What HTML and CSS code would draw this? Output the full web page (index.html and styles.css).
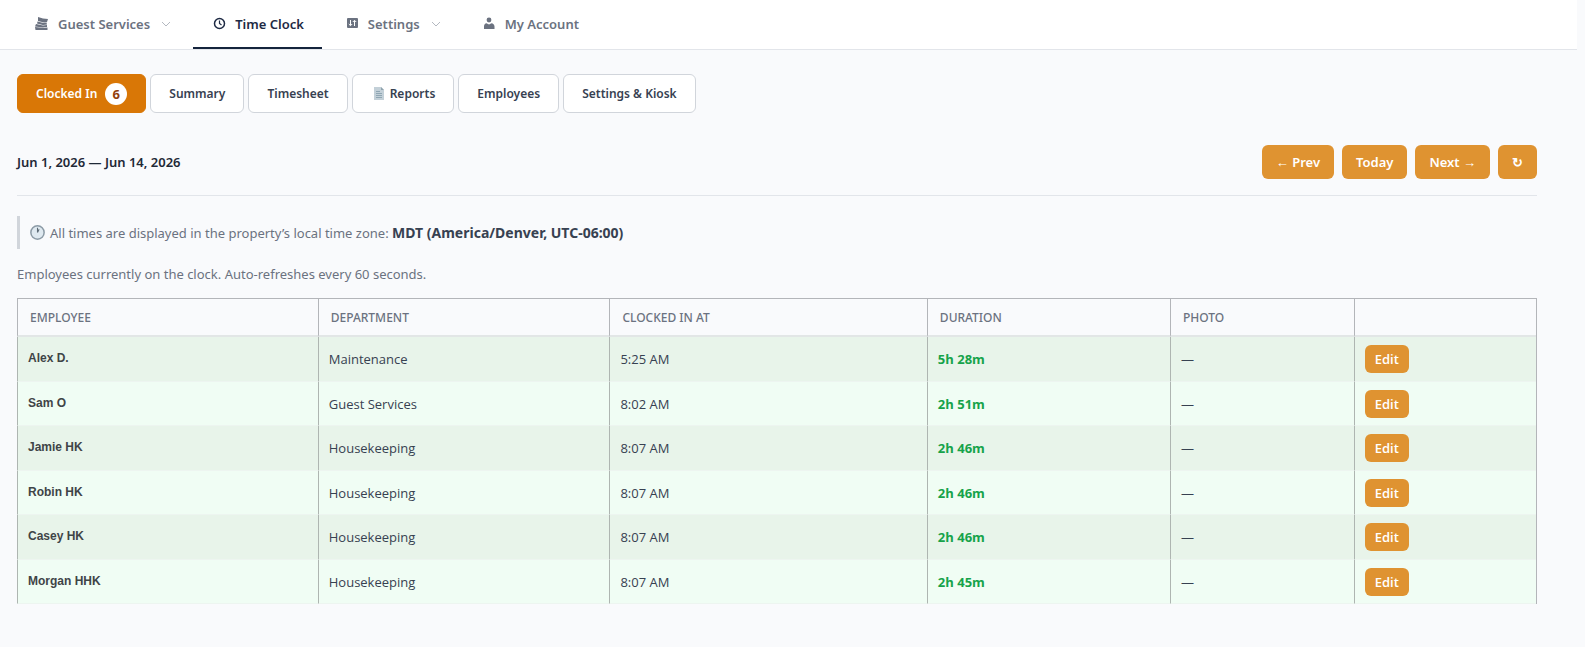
FILE: index.html
```
<!DOCTYPE html>
<html lang="en">
<head>
  <meta charset="UTF-8" />
  <title>Time Clock</title>
  <link rel="stylesheet" href="styles.css">
</head>
<body>
  <nav class="topnav">
    <a href="#" class="nav-item">
      <svg class="nav-icon" viewBox="0 0 16 16" fill="currentColor">
        <path d="M4 1l5 1.500 5 .5-1 3-3 .5-6-1.500z" />
        <path d="M3.500 5.500l6 1.500 3-.5.5 2-4 .5-6-1.500z" />
        <path d="M2 8l7 1.500 4-.5v2l-4 .5-8-1z" />
        <path d="M1 11l9 1 3.500-.5V14H1.500z" />
      </svg>
      <span>Guest Services</span>
      <svg class="chevron" viewBox="0 0 10 10"><path d="M1 3l4 4 4-4" /></svg>
    </a>
    <a href="#" class="nav-item active">
      <svg class="nav-icon" viewBox="0 0 16 16" fill="none" stroke="currentColor" stroke-width="1.500">
        <circle cx="8.500" cy="7.500" r="5" />
        <path d="M8.500 4.500v3l2 1.500" stroke-width="1.200" />
      </svg>
      <span>Time Clock</span>
    </a>
    <a href="#" class="nav-item">
      <svg class="nav-icon" viewBox="0 0 16 16">
        <rect x="3" y="2" width="11" height="10" rx="1" fill="currentColor" />
        <path d="M6.500 4v5.500M4.800 8l1.700 1.700L8.200 8M10.500 10V4.500M8.800 6l1.700-1.700L12.200 6" stroke="#fff" fill="none" />
      </svg>
      <span>Settings</span>
      <svg class="chevron" viewBox="0 0 10 10"><path d="M1 3l4 4 4-4" /></svg>
    </a>
    <a href="#" class="nav-item">
      <svg class="nav-icon" viewBox="0 0 16 16" fill="currentColor">
        <circle cx="8" cy="4" r="2.400" />
        <path d="M3 13v-2.500C3 8.500 4 7.500 5.500 7.200L8 8.500l2.500-1.300c1.500.3 3 1.300 3 3.300V13z" />
      </svg>
      <span>My Account</span>
    </a>
  </nav>

  <main class="page">
    <div class="tabs">
      <button class="tab active">Clocked In <span class="count">6</span></button>
      <button class="tab">Summary</button>
      <button class="tab">Timesheet</button>
      <button class="tab">
        <svg class="doc-icon" viewBox="0 0 12 14">
          <path d="M1 0h7l3 3v10H1z" fill="#c3d0d8" />
          <path d="M8 0v3h3z" fill="#8fa3ae" />
          <path d="M3 4.500h4M3 6.500h6M3 8.500h6M3 10.500h6" stroke="#8fa6b3" />
        </svg>
        Reports
      </button>
      <button class="tab">Employees</button>
      <button class="tab">Settings &amp; Kiosk</button>
    </div>

    <div class="period">
      <div class="period-label">Jun 1, 2026 — Jun 14, 2026</div>
      <div class="period-nav">
        <button class="btn">← Prev</button>
        <button class="btn">Today</button>
        <button class="btn">Next →</button>
        <button class="btn" aria-label="Refresh">↻</button>
      </div>
    </div>

    <div class="tz-note">
      <svg class="clock-icon" viewBox="0 0 14 14">
        <circle cx="7" cy="7" r="6.200" fill="#dfe9f0" stroke="#8c9ba6" stroke-width="1.400" />
        <path d="M7 7V2.500M7 7l1.500-3" stroke="#5d6b76" fill="none" />
      </svg>
      <span>All times are displayed in the property’s local time zone: <strong>MDT (America/Denver, UTC-06:00)</strong></span>
    </div>

    <p class="hint">Employees currently on the clock. Auto-refreshes every 60 seconds.</p>

    <table class="clock-table">
      <colgroup>
        <col class="col-employee">
        <col class="col-department">
        <col class="col-clocked">
        <col class="col-duration">
        <col class="col-photo">
        <col>
      </colgroup>
      <thead>
        <tr>
          <th>Employee</th>
          <th>Department</th>
          <th>Clocked In At</th>
          <th>Duration</th>
          <th>Photo</th>
          <th></th>
        </tr>
      </thead>
      <tbody>
        <tr>
          <td class="name">Alex D.</td>
          <td>Maintenance</td>
          <td>5:25 AM</td>
          <td class="duration">5h 28m</td>
          <td>—</td>
          <td><button class="btn btn-edit">Edit</button></td>
        </tr>
        <tr>
          <td class="name">Sam O</td>
          <td>Guest Services</td>
          <td>8:02 AM</td>
          <td class="duration">2h 51m</td>
          <td>—</td>
          <td><button class="btn btn-edit">Edit</button></td>
        </tr>
        <tr>
          <td class="name">Jamie HK</td>
          <td>Housekeeping</td>
          <td>8:07 AM</td>
          <td class="duration">2h 46m</td>
          <td>—</td>
          <td><button class="btn btn-edit">Edit</button></td>
        </tr>
        <tr>
          <td class="name">Robin HK</td>
          <td>Housekeeping</td>
          <td>8:07 AM</td>
          <td class="duration">2h 46m</td>
          <td>—</td>
          <td><button class="btn btn-edit">Edit</button></td>
        </tr>
        <tr>
          <td class="name">Casey HK</td>
          <td>Housekeeping</td>
          <td>8:07 AM</td>
          <td class="duration">2h 46m</td>
          <td>—</td>
          <td><button class="btn btn-edit">Edit</button></td>
        </tr>
        <tr>
          <td class="name">Morgan HHK</td>
          <td>Housekeeping</td>
          <td>8:07 AM</td>
          <td class="duration">2h 45m</td>
          <td>—</td>
          <td><button class="btn btn-edit">Edit</button></td>
        </tr>
      </tbody>
    </table>
  </main>
</body>
</html>
```
FILE: styles.css
```
* {
  box-sizing: border-box;
}

body {
  margin: 0;
  font-family: "Noto Sans", "Open Sans", sans-serif;
  font-size: 13px;
  line-height: 20px;
  background: #f9fafc;
  color: #374151;
}

button {
  font-family: inherit;
  font-size: 13px;
  line-height: 20px;
  cursor: pointer;
}

.topnav {
  display: flex;
  gap: 4px;
  height: 50px;
  margin-right: 8px;
  padding: 0 16px;
  background: #fff;
  border-bottom: 1px solid #e2e5ea;
}

.nav-item {
  display: flex;
  align-items: center;
  gap: 8px;
  padding: 0 18px;
  border-bottom: 2px solid transparent;
  color: #6b7280;
  font-weight: 600;
  text-decoration: none;
}

.nav-item.active {
  color: #1e2a44;
  border-bottom-color: #14243c;
}

.nav-icon {
  width: 16px;
  height: 16px;
}

.chevron {
  width: 10px;
  height: 10px;
  margin-left: 3px;
  fill: none;
  stroke: #b4b9c1;
}

.page {
  padding: 24px 48px 0 17px;
}

.tabs {
  display: flex;
  gap: 4px;
}

.tab {
  display: flex;
  align-items: center;
  height: 39px;
  padding: 0 18px;
  border: 1px solid #d1d5db;
  border-radius: 6px;
  background: #fff;
  color: #374151;
  font-size: 12px;
  font-weight: 600;
}

.tab.active {
  background: #d97706;
  border-color: #d97706;
  color: #fff;
}

.count {
  width: 22px;
  height: 22px;
  margin-left: 8px;
  border-radius: 11px;
  background: #fff;
  color: #92400e;
  font-size: 13px;
  font-weight: 700;
  line-height: 22px;
  text-align: center;
}

.doc-icon {
  width: 12px;
  height: 14px;
  margin: 0 5px 0 2px;
}

.period {
  display: flex;
  align-items: center;
  justify-content: space-between;
  margin-top: 32px;
  padding-bottom: 16px;
  border-bottom: 1px solid #e2e5ea;
}

.period-label {
  color: #1f2937;
  font-weight: 600;
}

.period-nav {
  display: flex;
  gap: 8px;
}

.btn {
  height: 34px;
  padding: 0 14px;
  border: none;
  border-radius: 6px;
  background: #df9331;
  color: #fff;
  font-weight: 600;
}

.tz-note {
  display: flex;
  align-items: center;
  gap: 5px;
  height: 33px;
  margin-top: 20px;
  padding-left: 10px;
  border-left: 3px solid #d1d5db;
  color: #6b7280;
}

.tz-note strong {
  color: #374151;
  font-size: 14px;
}

.clock-icon {
  width: 15px;
  height: 15px;
}

.hint {
  margin: 15px 0 14px;
  color: #6b7280;
}

.clock-table {
  width: 100%;
  table-layout: fixed;
  border-collapse: separate;
  border-spacing: 0;
  border-top: 1px solid #b3b5b9;
  border-right: 1px solid #b3b5b9;
}

.col-employee {
  width: 19.8%;
}

.col-department {
  width: 19.2%;
}

.col-clocked {
  width: 20.9%;
}

.col-duration {
  width: 16%;
}

.col-photo {
  width: 12.1%;
}

.clock-table th {
  height: 38px;
  padding: 2px 12px 0;
  border-left: 1px solid #b3b5b9;
  border-bottom: 2px solid #e2e6e6;
  color: #6b7280;
  font-size: 12px;
  font-weight: 500;
  text-align: left;
  text-transform: uppercase;
}

.clock-table td {
  height: 45px;
  padding: 0 10px;
  border-left: 1px solid #aeb5b1;
  border-bottom: 1px solid #edf5f0;
  background: #e8f4ea;
  font-family: "Open Sans", "Noto Sans", sans-serif;
}

.clock-table tr:nth-child(even) td {
  height: 44px;
  background: #f0fdf4;
}

.clock-table .name {
  padding-bottom: 2px;
  color: #3f4447;
  font-family: "Liberation Sans", Arial, sans-serif;
  font-size: 12px;
  font-weight: 700;
}

.clock-table .duration {
  color: #16a34a;
  font-weight: 700;
}

.btn-edit {
  display: block;
  height: 28px;
  padding: 0 10px;
}
```
